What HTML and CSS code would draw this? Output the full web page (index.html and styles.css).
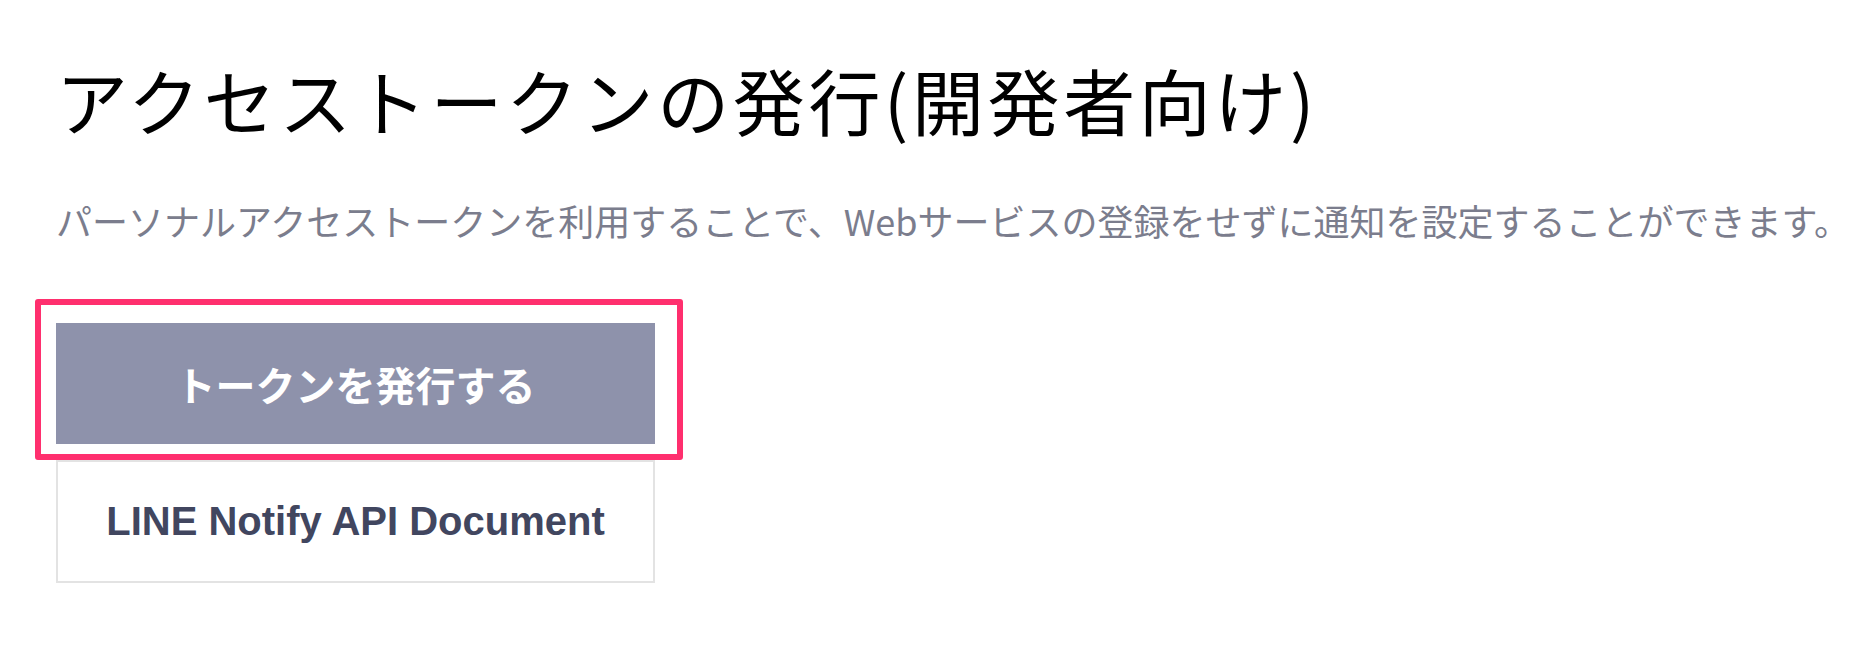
FILE: index.html
```html
<!DOCTYPE html>
<html lang="ja">
<head>
<meta charset="utf-8">
<link rel="stylesheet" href="styles.css">
</head>
<body>
<main class="page">
  <h1 class="title">アクセストークンの発行(開発者向け)</h1>
  <p class="lead">パーソナルアクセストークンを利用することで、Webサービスの登録をせずに通知を設定することができます。</p>
  <div class="actions">
    <button class="btn btn-primary">トークンを発行する</button>
    <a class="btn btn-secondary">LINE Notify API Document</a>
    <div class="highlight"></div>
  </div>
</main>
</body>
</html>
```
FILE: styles.css
```css
html, body {
  margin: 0;
  padding: 0;
  background: #ffffff;
}
.page {
  padding: 56px 0 0 56px;
  font-family: "Noto Sans CJK JP", "Noto Sans", sans-serif;
}
.title {
  margin: 0;
  font-size: 72px;
  line-height: 86px;
  font-weight: 400;
  color: #000000;
  letter-spacing: 3.6px;
}
.lead {
  margin: 53px 0 0 0;
  font-size: 36px;
  line-height: 50px;
  color: #7b7d8d;
  white-space: nowrap;
}
.actions {
  position: relative;
  display: flex;
  flex-direction: column;
  gap: 16px;
  width: 599px;
  margin-top: 78px;
}
.btn {
  box-sizing: border-box;
  display: flex;
  align-items: center;
  justify-content: center;
  width: 599px;
  border: 0;
  margin: 0;
  padding: 0;
  font-weight: 700;
}
.btn-primary {
  height: 121px;
  background: #8e92ab;
  color: #ffffff;
  font-family: "Noto Sans CJK JP", sans-serif;
  font-size: 40px;
}
.btn-secondary {
  height: 123px;
  background: #ffffff;
  border: 2px solid #e3e3e3;
  color: #41465f;
  font-family: "Liberation Sans", Arial, sans-serif;
  font-size: 40px;
}
.highlight {
  position: absolute;
  left: -21px;
  top: -24px;
  width: 648px;
  height: 161px;
  box-sizing: border-box;
  border: 6px solid #ff2f6e;
  border-radius: 3px;
  pointer-events: none;
}
```
